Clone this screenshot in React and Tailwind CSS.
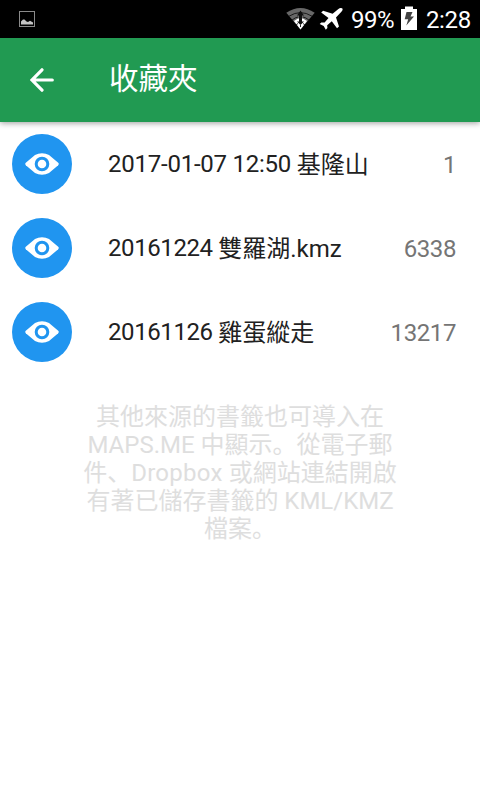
import React from "react";

const bookmarkSets = [
  { code: "2017-01-07 12:50", title: "基隆山", count: 1, spacing: "tracking-[-0.24px]" },
  { code: "20161224", title: "雙羅湖.kmz", count: 6338, spacing: "tracking-[-0.4px]" },
  { code: "20161126", title: "雞蛋縱走", count: 13217, spacing: "tracking-[-0.4px]" },
];

const PictureIcon = () => (
  <svg width="16" height="16" viewBox="0 0 16 16">
    <rect x="0.5" y="0.5" width="15" height="15" fill="none" stroke="#8a8a8a" />
    <path d="M2 13.5V10.5L4 8.5L5.5 8.5L7.5 10.5L9 11L11 9.8L14 11.5V13.5Z" fill="#c4c4c4" />
  </svg>
);

const WifiIcon = () => (
  <svg width="29" height="22" viewBox="0 0 29 22">
    <path d="M0.3 4.8Q14.5 -4.6 28.7 4.8L14.5 21.5Z" fill="#686868" />
    <path d="M3 8.2Q14.5 1 26 8.2" fill="none" stroke="#111" strokeWidth="0.9" />
    <path d="M5.8 12.2Q10 9 12 9M23.2 12.2Q19 9 17 9" fill="none" stroke="#111" strokeWidth="0.9" />
    <path d="M14.5 2.5L18 7.5H16V11H13V7.5H11Z" fill="#111" />
    <path d="M8 13L12 10.5H17L21 13L14.5 21.5Z" fill="#fff" />
    <path d="M13 9.5H16V13.5H18L14.5 17L11 13.5H13Z" fill="#111" />
    <path d="M10 17.2L12 15.4M19 17.2L17 15.4M14.5 17V19" fill="none" stroke="#111" strokeWidth="0.9" />
  </svg>
);

const PlaneIcon = () => (
  <svg width="24" height="23" viewBox="0 0 24 23">
    <path
      d="M23.4 0.5Q24.2 1.8 22.4 3.8L17 9.4L20 18.5L18 20.3L12.8 13.3L8.2 17.2L8.4 20L6.8 21.8L4.7 18L0.7 16L2.3 14.4L5.6 14.6L9.5 10L2.2 4.6L4.1 2.7L13.6 5.7L19.4 0.9Q21.8 -0.7 23.4 0.5Z"
      fill="#fff"
    />
  </svg>
);

const BatteryIcon = () => (
  <svg width="16" height="24" viewBox="0 0 16 24">
    <path d="M4 0.5H12V3H16V24H0V3H4Z" fill="#fff" />
    <path d="M5.5 6H11.5L9.5 10.5H13L5.3 19.5L7.2 13.2H3.7Z" fill="#424242" />
  </svg>
);

const BackIcon = () => (
  <svg width="24" height="24" viewBox="0 0 24 24" fill="none" stroke="#fff" strokeWidth="3.2" strokeLinecap="round">
    <path d="M12 1.8L2 12L12 22.2M2.5 12H22.3" />
  </svg>
);

const EyeIcon = () => (
  <svg width="34" height="22" viewBox="0 0 34 22">
    <path
      d="M0.8 9.8L10 2Q13 0.2 17 0.2Q21 0.2 24 2L33.2 9.8Q34.3 11 33.2 12.2L24 20Q21 21.8 17 21.8Q13 21.8 10 20L0.8 12.2Q-0.3 11 0.8 9.8Z"
      fill="#fff"
    />
    <circle cx="17" cy="11" r="5.8" fill="#fff" stroke="#2095f0" strokeWidth="3" />
  </svg>
);

const App = () => {
  return (
    <div className="w-[480px] h-[800px] bg-white flex flex-col overflow-hidden font-[Roboto,'Noto_Sans_CJK_SC',sans-serif]">
      {/* Status bar */}
      <div className="h-[38px] shrink-0 bg-black flex items-center justify-between pl-[19px] pr-[9px] text-white text-2xl leading-none">
        <PictureIcon />
        <div className="flex items-center">
          <WifiIcon />
          <span className="ml-[4px]"><PlaneIcon /></span>
          <span className="ml-[8px] w-[44px] whitespace-nowrap tracking-[-0.4px] pt-0.5">99%</span>
          <span className="ml-[6px] pb-0.5"><BatteryIcon /></span>
          <span className="ml-[9px] pt-0.5 tracking-[-0.3px]">2:28</span>
        </div>
      </div>

      {/* Toolbar */}
      <header className="h-[84px] shrink-0 bg-[#219a52] flex items-center pl-[30px] text-white shadow-[0_1px_6px_rgba(0,0,0,0.4)]">
        <BackIcon />
        <h1 className="ml-[55px] text-[29.5px] leading-none">收藏夾</h1>
      </header>

      {/* Bookmark sets */}
      <ul>
        {bookmarkSets.map((set) => (
          <li key={set.code} className="h-[84px] flex items-center pl-3 pr-6 text-2xl leading-none">
            <div className="size-[60px] rounded-full bg-[#2095f0] flex items-center justify-center">
              <EyeIcon />
            </div>
            <div className="ml-9 flex-1 flex items-center text-[#212121] whitespace-pre">
              <span className={set.spacing}>{set.code} </span>
              <span className="pt-px">{set.title}</span>
            </div>
            <span className="text-[#757575] pt-0.5 tracking-[-0.4px]">{set.count}</span>
          </li>
        ))}
      </ul>

      {/* Import hint */}
      <p className="mt-[29px] text-center text-2xl leading-[28px] text-[#dedede] whitespace-nowrap">
        <span className="block">其他來源的書籤也可導入在</span>
        <span className="block">MAPS.ME 中顯示。從電子郵</span>
        <span className="block">件、<span className="tracking-[0.25px]">Dropbox </span>或網站連結開啟</span>
        <span className="block">有著已儲存書籤的 KML/KMZ</span>
        <span className="block">檔案。</span>
      </p>
    </div>
  );
};

export default App;
